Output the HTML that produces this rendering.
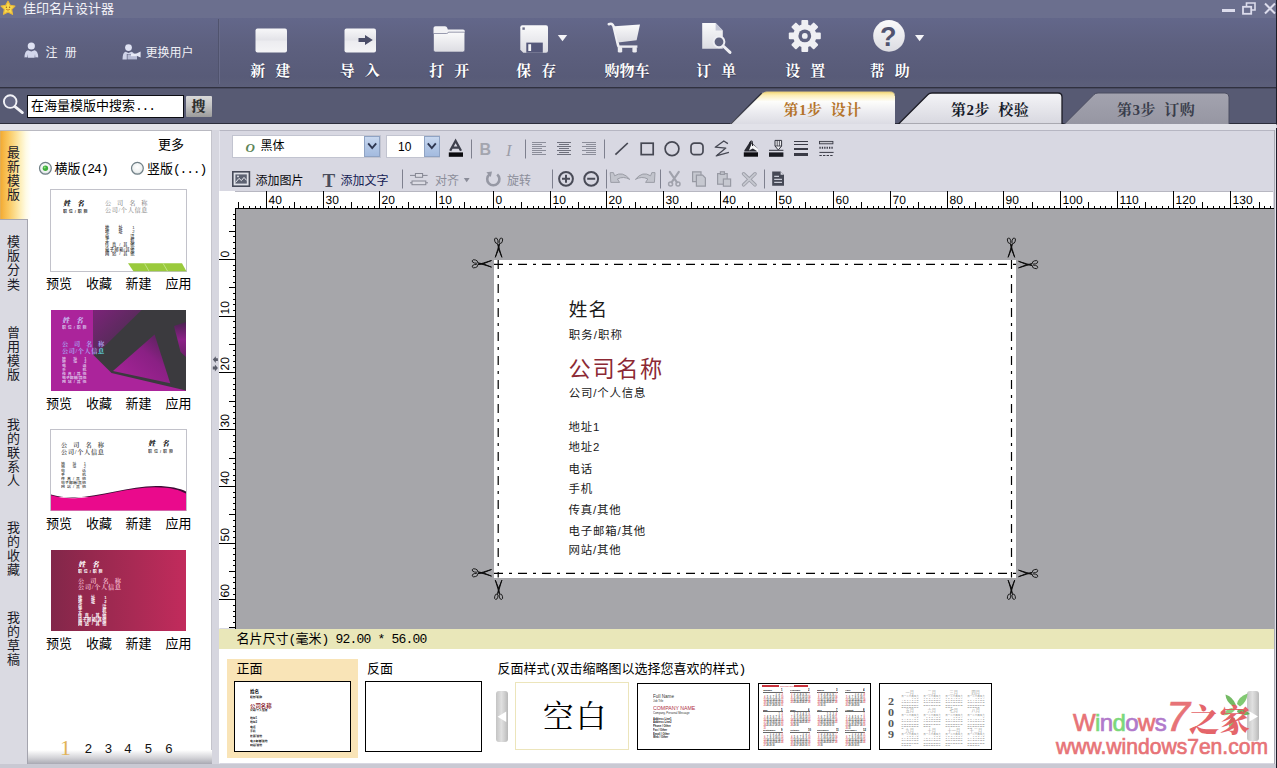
<!DOCTYPE html>
<html lang="zh-CN">
<head>
<meta charset="utf-8">
<title>佳印名片设计器</title>
<style>
*{box-sizing:border-box;margin:0;padding:0}
html,body{width:1277px;height:768px;overflow:hidden}
body{position:relative;background:#d9d9e1;font-family:"Liberation Sans","Noto Sans CJK SC",sans-serif;font-size:13px;color:#000;line-height:1}
.a{position:absolute}
.t{position:absolute;white-space:nowrap;line-height:1}
.ui{font-family:"Liberation Mono","Noto Sans CJK SC",monospace}
.song{font-family:"Liberation Serif","Noto Serif CJK SC",serif}
.hei{font-family:"Liberation Sans","Noto Sans CJK SC",sans-serif}
svg{position:absolute;overflow:visible}
/* title + toolbar */
#title{left:0;top:0;width:1277px;height:18px;background:#6b6f8e}
#tbar{left:0;top:18px;width:1277px;height:69px;background:linear-gradient(#63678a 0%,#5d607f 40%,#585b78 85%,#5c5f7a 100%)}
#tline{left:0;top:87px;width:1277px;height:2px;background:linear-gradient(#30313f 50%,#484a60 50%)}
#sbar{left:0;top:89px;width:1277px;height:35px;background:#575a73}
.tl{color:#fff;font-weight:700;font-size:15px;font-family:"Liberation Serif","Noto Serif CJK SC",serif;text-shadow:0 1px 1px rgba(30,30,50,.6)}
</style>
</head>
<body>
<div class="a" id="title"></div>
<div class="a" id="tbar"></div>
<div class="a" id="tline"></div>
<div class="a" id="sbar"></div>
<div class="a" style="left:1276px;top:0;width:1px;height:768px;background:#1c1c28"></div>
<!-- app icon -->
<svg style="left:0;top:0" width="17" height="17" viewBox="0 0 17 17"><path d="M8 1.2 L10.2 5.4 L14.9 6 L11.6 9.4 L12.5 14.3 L8 12 L3.5 14.3 L4.4 9.4 L1.1 6 L5.8 5.4 Z" fill="#f7d94c" stroke="#e9b93a" stroke-width="1.2" stroke-linejoin="round"/><circle cx="6.4" cy="7.3" r=".7" fill="#a0601c"/><circle cx="9.6" cy="7.3" r=".7" fill="#a0601c"/><path d="M6.2 9.3 Q8 11 9.8 9.3" stroke="#c0651c" stroke-width=".8" fill="none"/></svg>
<div class="t ui" style="left:23px;top:2.5px;font-size:13px;color:#f3f3f8">佳印名片设计器</div>
<!-- window buttons -->
<div class="a" style="left:1222px;top:9px;width:13px;height:3px;background:#dcdcec"></div>
<svg style="left:1242px;top:2px" width="14" height="13" viewBox="0 0 14 13"><path d="M4.5 4.5V1h8.5v7H9.5" fill="none" stroke="#dcdcec" stroke-width="1.6"/><rect x="1" y="4.8" width="8.2" height="7" fill="none" stroke="#dcdcec" stroke-width="1.8"/></svg>
<svg style="left:1264px;top:3px" width="12" height="11" viewBox="0 0 12 11"><path d="M1 .5L11 10.5M11 .5L1 10.5" stroke="#dcdcec" stroke-width="2"/></svg>
<!-- left toolbar -->
<svg style="left:24px;top:42px" width="15" height="16" viewBox="0 0 15 16"><circle cx="7.3" cy="4" r="3.6" fill="#dfe2f3"/><path d="M.5 15.5Q.5 9 4 8.2L7.3 9.5L10.6 8.2Q14.2 9 14.2 15.5Q12.5 15 11.3 15.5L11 12L10.6 15.7H4L3.6 12L3.3 15.5Q2 15 .5 15.5Z" fill="#d3d7ec"/></svg>
<div class="t ui" style="left:45.5px;top:47.5px;font-size:12px;color:#f0f0f6;word-spacing:0">注 册</div>
<svg style="left:122px;top:43.6px" width="20" height="16" viewBox="0 0 20 16"><circle cx="6.5" cy="3.6" r="3.4" fill="#dfe2f3"/><path d="M.5 15.5Q.5 8.6 3.6 7.8L6.5 9L9.4 7.8Q11.5 8.4 12 10H4.8V15.6Z" fill="#cfd3e8"/><rect x="5.5" y="10.4" width="9.5" height="5" fill="#b9bdd6"/><path d="M14 9.8L18.6 7.6V13.4L14 11.6Z" fill="#e4e6f4"/><rect x="9" y="9.6" width="5.5" height="2.6" fill="#e9ebf7"/></svg>
<div class="t ui" style="left:145.5px;top:47.5px;font-size:12px;color:#f0f0f6">更换用户</div>
<div class="a" style="left:218px;top:19px;width:1px;height:65px;background:#50536d"></div>
<div class="a" style="left:219px;top:19px;width:1px;height:65px;background:#676a88"></div>
<!-- main toolbar icons -->
<svg style="left:0;top:0" width="1277" height="88" viewBox="0 0 1277 88">
<defs>
<linearGradient id="gw" x1="0" y1="0" x2="0" y2="1"><stop offset="0" stop-color="#f7f7f9"/><stop offset=".48" stop-color="#e3e3e8"/><stop offset=".52" stop-color="#ececf0"/><stop offset="1" stop-color="#f4f4f6"/></linearGradient>
<linearGradient id="gw2" x1="0" y1="0" x2="0" y2="1"><stop offset="0" stop-color="#fafafb"/><stop offset="1" stop-color="#dcdce2"/></linearGradient>
</defs>
<!-- new -->
<rect x="255.5" y="28.5" width="31.5" height="24" rx="2" fill="url(#gw)"/>
<!-- import -->
<rect x="344.5" y="28.5" width="31.5" height="24" rx="2" fill="url(#gw)"/>
<path d="M358.5 38H365V35L372.8 40L365 45V42H358.5Z" fill="#4a4d68"/>
<!-- open -->
<path d="M433.5 28Q433.5 26.2 435.5 26.2H445Q446.8 26.2 447.3 28L447.8 29.4H463Q464.8 29.4 464.8 31V34H433.5Z" fill="#f2f2f5"/>
<path d="M433.5 33.5H446.5Q448 33.5 448.4 32.2H464.8V50Q464.8 52 462.8 52H435.5Q433.5 52 433.5 50Z" fill="url(#gw2)" stroke="#5b5e7e" stroke-width=".6"/>
<!-- save -->
<path d="M522.3 25.3H546Q548 25.3 548 27.3V50.7Q548 52.7 546 52.7H523.3L520.3 49.7V27.3Q520.3 25.3 522.3 25.3Z" fill="url(#gw2)"/>
<rect x="526.3" y="42.6" width="16.5" height="10.1" fill="#55587a"/>
<rect x="528.3" y="44.2" width="2.8" height="6.8" fill="#f4f4f6"/>
<rect x="522.4" y="27.4" width="2.4" height="2.4" fill="#6a6d88"/>
<path d="M557.8 35H567.2L562.5 41.2Z" fill="#f4f4f8"/>
<!-- cart -->
<path d="M608.8 24.2Q612.2 22.6 613.6 26.4L618.2 45.6" fill="none" stroke="#f0f0f4" stroke-width="2.6" stroke-linecap="round"/>
<path d="M614.3 26.2L640 24.6L636.6 40.2L618 42.6Z" fill="url(#gw2)"/>
<path d="M617.6 46.6H637.4" stroke="#ececf1" stroke-width="2.4"/>
<rect x="617.8" y="47" width="4.4" height="5.6" rx="1.4" fill="#ececf1"/><rect x="632.4" y="47" width="4.4" height="5.6" rx="1.4" fill="#ececf1"/>
<!-- order -->
<path d="M702.2 23H715.6L722.8 30.6V48.7H702.2Z" fill="url(#gw2)"/>
<path d="M715.6 23V30.6H722.8Z" fill="#c4c6d6"/>
<circle cx="719" cy="41.8" r="5.4" fill="#60637f" stroke="#eeeef3" stroke-width="2"/>
<path d="M723.2 46L730 52.4" stroke="#eeeef3" stroke-width="3" stroke-linecap="round"/>
<!-- gear -->
<g transform="translate(804.8 35.9)" fill="#efeff3">
<circle r="11.6"/>
<g id="tooth"><rect x="-3.4" y="-16" width="6.8" height="7" rx="1"/></g>
<use href="#tooth" transform="rotate(45)"/><use href="#tooth" transform="rotate(90)"/><use href="#tooth" transform="rotate(135)"/><use href="#tooth" transform="rotate(180)"/><use href="#tooth" transform="rotate(225)"/><use href="#tooth" transform="rotate(270)"/><use href="#tooth" transform="rotate(315)"/>
<circle r="6.4" fill="#5f6280"/><circle r="2.9"/>
</g>
<!-- help -->
<circle cx="889" cy="35.9" r="15.8" fill="url(#gw2)"/>
<path d="M915 35H924.2L919.6 41.2Z" fill="#f4f4f8"/>
</svg>
<div class="t" style="left:880px;top:22px;font:700 27px 'Liberation Sans',sans-serif;color:#50536f">?</div>
<div class="t tl" style="left:250.3px;top:63.7px;word-spacing:6.3px">新 建</div>
<div class="t tl" style="left:339.8px;top:63.7px;word-spacing:6.3px">导 入</div>
<div class="t tl" style="left:429.3px;top:63.7px;word-spacing:6.3px">打 开</div>
<div class="t tl" style="left:516.3px;top:63.7px;word-spacing:6.3px">保 存</div>
<div class="t tl" style="left:604.5px;top:63.7px">购物车</div>
<div class="t tl" style="left:696.3px;top:63.7px;word-spacing:6.3px">订 单</div>
<div class="t tl" style="left:785.3px;top:63.7px;word-spacing:6.3px">设 置</div>
<div class="t tl" style="left:869.8px;top:63.7px;word-spacing:6.3px">帮 助</div>
<!-- search -->
<svg style="left:0;top:90px" width="28" height="30" viewBox="0 90 28 30"><circle cx="10.2" cy="101.6" r="6.3" fill="#676a86" stroke="#f2f2f7" stroke-width="1.9"/><path d="M15 106.6L22.4 112.6" stroke="#f2f2f7" stroke-width="2.8" stroke-linecap="round"/></svg>
<div class="a" style="left:27px;top:95px;width:157px;height:23px;background:#fff;border:1.5px solid #0c0c12"></div>
<div class="t ui" style="left:31px;top:100px;font-size:13px;letter-spacing:0">在海量模版中搜索<span style="letter-spacing:-1.2px">...</span></div>
<div class="a" style="left:186px;top:96px;width:26px;height:21px;background:linear-gradient(#d9d9d9,#c4c4c4 45%,#9c9c9c);border-radius:1px"></div>
<div class="t song" style="left:191.5px;top:99.5px;font-size:14px;font-weight:900;color:#303030">搜</div>
<div class="a" style="left:0;top:123.4px;width:732px;height:1.1px;background:#2c2d3b"></div><div class="a" style="left:895px;top:123.4px;width:381px;height:1.1px;background:#2c2d3b"></div>
<!-- step tabs -->
<svg style="left:700px;top:88px" width="577" height="40" viewBox="700 88 577 40">
<defs>
<linearGradient id="t1" x1="0" y1="0" x2="0" y2="1"><stop offset="0" stop-color="#f3d571"/><stop offset=".12" stop-color="#fbeeb8"/><stop offset=".3" stop-color="#fdfdfb"/><stop offset=".6" stop-color="#ededf1"/><stop offset="1" stop-color="#dadae2"/></linearGradient>
<linearGradient id="t2" x1="0" y1="0" x2="0" y2="1"><stop offset="0" stop-color="#f4f4f7"/><stop offset="1" stop-color="#d7d7df"/></linearGradient>
<linearGradient id="t3" x1="0" y1="0" x2="0" y2="1"><stop offset="0" stop-color="#a3a3af"/><stop offset="1" stop-color="#9696a2"/></linearGradient>
</defs>
<path d="M1064 124.5L1094 94.5Q1095.5 93 1098 93H1225Q1229 93 1229 97V124.5Z" fill="url(#t3)" stroke="#4a4c60" stroke-width="1"/>
<path d="M898 124.5L928 94.5Q929.5 93 932 93H1058Q1062 93 1062 97V124.5Z" fill="url(#t2)" stroke="#1c1c26" stroke-width="1.3"/>
<path d="M700 124.4H731L762 93.4Q764 91.4 767 91.4H890Q895 91.4 895 96V124.4H1277V128H700Z" fill="#d9d9e1"/>
<path d="M729 125L762 93.4Q764 91.4 767 91.4H890Q895 91.4 895 96V125Z" fill="url(#t1)"/>
<path d="M730.4 124.4L761.6 93.2" fill="none" stroke="#1e1f2a" stroke-width="1.3" opacity=".8"/><path d="M762 93.4Q764 91.6 767 91.6H890Q894.8 91.6 894.8 96" fill="none" stroke="#3d3f52" stroke-width=".7" opacity=".5"/>
</svg>
<div class="t song" style="left:783.5px;top:103px;font-size:15px;font-weight:700;color:#b4742a;word-spacing:4px;letter-spacing:.5px">第1步 设计</div>
<div class="t song" style="left:951px;top:103.2px;font-size:15px;font-weight:700;color:#161b2a;word-spacing:4px;letter-spacing:.5px">第2步 校验</div>
<div class="t song" style="left:1117px;top:103.2px;font-size:15px;font-weight:700;color:#3a3e4c;word-spacing:4px;letter-spacing:.5px">第3步 订购</div>
<!-- left panel -->
<style>
.vt{position:absolute;left:7px;width:13px;font-size:13px;line-height:14.05px;color:#1b1b28;text-align:center;word-break:break-all;white-space:normal}
.lb{position:absolute;font-size:13px;white-space:nowrap;line-height:1;color:#000}
.pg{position:absolute;top:743px;font-size:13px;line-height:1;color:#111}
</style>
<div class="a" style="left:0;top:124px;width:1276px;height:6px;background:#e2e2e9"></div>
<div class="a" style="left:0;top:130px;width:28px;height:638px;background:#dadae2;border-right:1px solid #a4a4ae"></div>
<div class="a" style="left:28px;top:130px;width:184px;height:634px;background:#fff;border-right:1px solid #c4c4cc"></div>
<div class="a" style="left:28px;top:750px;width:183.5px;height:14px;background:linear-gradient(#fff,#d4d4d8 55%,#a9a9b3)"></div>
<div class="a" style="left:212px;top:130px;width:7px;height:638px;background:#d6d6df"></div>
<div class="a" style="left:0;top:219px;width:28px;height:1px;background:#a6a6b0"></div><div class="a" style="left:0;top:130px;width:60px;height:89px;background:linear-gradient(90deg,#d8b06a 0,#f3ac36 1.2px,#f6b847 4px,#fac962 9px,#fcdd8e 15px,#fef0be 21px,#fffbe6 26px,#fff 31px,#fff 100%)"></div>
<div class="a" style="left:0;top:129.5px;width:212px;height:1px;background:#b9b9c1"></div>
<div class="vt ui" style="top:146.5px">最新模版</div>
<div class="vt ui" style="top:236.4px">模版分类</div>
<div class="vt ui" style="top:327px">曾用模版</div>
<div class="vt ui" style="top:419px">我的联系人</div>
<div class="vt ui" style="top:521.5px">我的收藏</div>
<div class="vt ui" style="top:611.5px">我的草稿</div>
<div class="lb ui" style="left:158px;top:138.5px">更多</div>
<!-- radios -->
<svg style="left:38px;top:161px" width="110" height="15" viewBox="38 161 110 15">
<defs><radialGradient id="rg" cx=".5" cy=".4" r=".6"><stop offset="0" stop-color="#fff"/><stop offset=".7" stop-color="#eef1f1"/><stop offset="1" stop-color="#cfd6d8"/></radialGradient></defs>
<circle cx="45.4" cy="168.3" r="5.9" fill="url(#rg)" stroke="#6f7f86" stroke-width="1.2"/><circle cx="45.4" cy="168.3" r="2.7" fill="#3fae3b"/><circle cx="44.7" cy="167.6" r="1" fill="#8fe085"/>
<circle cx="137.4" cy="168.3" r="5.9" fill="url(#rg)" stroke="#6f7f86" stroke-width="1.2"/>
</svg>
<div class="lb ui" style="left:54.5px;top:163px">横版<span style="letter-spacing:-1px">(24)</span></div>
<div class="lb ui" style="left:147px;top:163px">竖版<span style="letter-spacing:-1.2px">(...)</span></div>
<svg style="left:211px;top:354px" width="9" height="20" viewBox="211 354 9 20"><path d="M212.8 359.6L215.8 356.2V358.2H217.9V361H215.8V363Z" fill="#5a5d6a"/><path d="M217.9 368L214.9 364.6V366.6H212.8V369.4H214.9V371.4Z" fill="#5a5d6a"/></svg>
<div class="lb ui" style="left:46px;top:277.5px">预览</div>
<div class="lb ui" style="left:86px;top:277.5px">收藏</div>
<div class="lb ui" style="left:125.5px;top:277.5px">新建</div>
<div class="lb ui" style="left:165.5px;top:277.5px">应用</div>
<div class="lb ui" style="left:46px;top:397.5px">预览</div>
<div class="lb ui" style="left:86px;top:397.5px">收藏</div>
<div class="lb ui" style="left:125.5px;top:397.5px">新建</div>
<div class="lb ui" style="left:165.5px;top:397.5px">应用</div>
<div class="lb ui" style="left:46px;top:517.5px">预览</div>
<div class="lb ui" style="left:86px;top:517.5px">收藏</div>
<div class="lb ui" style="left:125.5px;top:517.5px">新建</div>
<div class="lb ui" style="left:165.5px;top:517.5px">应用</div>
<div class="lb ui" style="left:46px;top:637.5px">预览</div>
<div class="lb ui" style="left:86px;top:637.5px">收藏</div>
<div class="lb ui" style="left:125.5px;top:637.5px">新建</div>
<div class="lb ui" style="left:165.5px;top:637.5px">应用</div>
<div class="t song" style="left:60px;top:737px;font-size:22px;color:#e2b455">1</div>
<div class="pg ui" style="left:84.5px">2</div>
<div class="pg ui" style="left:104.5px">3</div>
<div class="pg ui" style="left:124px">4</div>
<div class="pg ui" style="left:144.5px">5</div>
<div class="pg ui" style="left:165px">6</div>
<!-- template thumbnails -->
<div class="a" style="left:50px;top:189px;width:137px;height:83px;background:#fff;border:1px solid #c2c2ca"></div>
<svg style="left:50px;top:189px" width="137" height="83" viewBox="50 189 137 83"><path d="M128 263.3H182L186.4 271.2H133.4Z" fill="#9aca3c"/><path d="M144.5 263.3L149 271.2M163 263.3L167.6 271.2" stroke="#c4e48a" stroke-width=".9"/></svg>
<div class="t song" style="left:63.4px;top:199.6px;font-size:12px;line-height:12px;color:#151515;transform:scale(0.6000);transform-origin:0 0;font-weight:900;width:35.0px;text-align:justify;text-align-last:justify;white-space:normal;font-style:italic;">姓名</div>
<div class="t hei" style="left:63.4px;top:209.6px;font-size:12px;line-height:12px;color:#444;transform:scale(0.3333);transform-origin:0 0;font-weight:700;width:73.5px;text-align:justify;text-align-last:justify;white-space:normal;">职位/职称</div>
<div class="t song" style="left:105px;top:200.2px;font-size:12px;line-height:12px;color:#8a8a8a;transform:scale(0.5167);transform-origin:0 0;font-weight:500;width:82.1px;text-align:justify;text-align-last:justify;white-space:normal;">公司名称</div>
<div class="t song" style="left:105px;top:206.6px;font-size:12px;line-height:12px;color:#8a8a8a;transform:scale(0.5167);transform-origin:0 0;font-weight:500;width:82.1px;text-align:justify;text-align-last:justify;white-space:normal;">公司/个人信息</div>
<div class="t hei" style="left:105px;top:225.0px;font-size:12px;line-height:12px;color:#333;transform:scale(0.3500);transform-origin:0 0;font-weight:500;width:84.3px;text-align:justify;text-align-last:justify;white-space:normal;">地址1</div>
<div class="t hei" style="left:105px;top:229.35px;font-size:12px;line-height:12px;color:#333;transform:scale(0.3500);transform-origin:0 0;font-weight:500;width:84.3px;text-align:justify;text-align-last:justify;white-space:normal;">地址2</div>
<div class="t hei" style="left:105px;top:233.7px;font-size:12px;line-height:12px;color:#333;transform:scale(0.3500);transform-origin:0 0;font-weight:500;width:84.3px;text-align:justify;text-align-last:justify;white-space:normal;">电话</div>
<div class="t hei" style="left:105px;top:238.05px;font-size:12px;line-height:12px;color:#333;transform:scale(0.3500);transform-origin:0 0;font-weight:500;width:84.3px;text-align:justify;text-align-last:justify;white-space:normal;">手机</div>
<div class="t hei" style="left:105px;top:242.4px;font-size:12px;line-height:12px;color:#333;transform:scale(0.3500);transform-origin:0 0;font-weight:500;width:84.3px;text-align:justify;text-align-last:justify;white-space:normal;">传真/其他</div>
<div class="t hei" style="left:105px;top:246.75px;font-size:12px;line-height:12px;color:#333;transform:scale(0.3500);transform-origin:0 0;font-weight:500;width:84.3px;text-align:justify;text-align-last:justify;white-space:normal;">电子邮箱/其他</div>
<div class="t hei" style="left:105px;top:251.1px;font-size:12px;line-height:12px;color:#333;transform:scale(0.3500);transform-origin:0 0;font-weight:500;width:84.3px;text-align:justify;text-align-last:justify;white-space:normal;">网站/其他</div>
<svg style="left:51px;top:310px" width="135" height="81" viewBox="51 310 135 81">
<defs>
<linearGradient id="p1" x1="0" y1="0" x2="1" y2="1"><stop offset="0" stop-color="#7c2379"/><stop offset=".5" stop-color="#5c2a5e"/><stop offset="1" stop-color="#403644"/></linearGradient>
<linearGradient id="p2" x1="0" y1="1" x2="1" y2="0"><stop offset="0" stop-color="#ab249b"/><stop offset=".6" stop-color="#8a2084"/><stop offset="1" stop-color="#4a2450"/></linearGradient>
<linearGradient id="p3" x1="0" y1="0" x2="0" y2="1"><stop offset="0" stop-color="#4a2250"/><stop offset=".5" stop-color="#8c2188"/><stop offset="1" stop-color="#6a2068"/></linearGradient>
<linearGradient id="p4" x1="0" y1="0" x2="1" y2="1"><stop offset="0" stop-color="#3b3a3e"/><stop offset="1" stop-color="#7a2078"/></linearGradient>
</defs>
<rect x="51" y="310" width="135" height="81" fill="#ab249b"/>
<path d="M93.4 310H186V390.5L111.5 373L93.4 355Z" fill="#3b3a3e"/>
<path d="M93.4 310H141.6L98.6 352L93.4 354.7Z" fill="url(#p1)"/>
<path d="M154.6 334.5L170.2 383.3L113 371Z" fill="url(#p2)"/>
<path d="M174 326L186 322V357L180.6 352Z" fill="url(#p3)"/>
</svg>
<div class="t song" style="left:61.5px;top:316.8px;font-size:12px;line-height:12px;color:#c8b4ee;transform:scale(0.6000);transform-origin:0 0;font-weight:900;width:35.0px;text-align:justify;text-align-last:justify;white-space:normal;font-style:italic;">姓名</div>
<div class="t hei" style="left:61.5px;top:326px;font-size:12px;line-height:12px;color:#d4bce8;transform:scale(0.3333);transform-origin:0 0;font-weight:700;width:73.5px;text-align:justify;text-align-last:justify;white-space:normal;">职位/职称</div>
<div class="t song" style="left:61.5px;top:341.4px;font-size:12px;line-height:12px;color:#a9a4f0;transform:scale(0.5167);transform-origin:0 0;font-weight:700;width:81.9px;text-align:justify;text-align-last:justify;white-space:normal;">公司名称</div>
<div class="t song" style="left:61.5px;top:348.2px;font-size:12px;line-height:12px;color:#a9a4f0;transform:scale(0.5167);transform-origin:0 0;font-weight:700;width:81.9px;text-align:justify;text-align-last:justify;white-space:normal;">公司/个人信<span style="color:#5fd6e0">息</span></div>
<div class="t hei" style="left:61.5px;top:356.5px;font-size:12px;line-height:12px;color:#dcbfe6;transform:scale(0.3250);transform-origin:0 0;font-weight:700;width:75.4px;text-align:justify;text-align-last:justify;white-space:normal;">地址1</div>
<div class="t hei" style="left:61.5px;top:360.45px;font-size:12px;line-height:12px;color:#dcbfe6;transform:scale(0.3250);transform-origin:0 0;font-weight:700;width:75.4px;text-align:justify;text-align-last:justify;white-space:normal;">地址2</div>
<div class="t hei" style="left:61.5px;top:364.4px;font-size:12px;line-height:12px;color:#dcbfe6;transform:scale(0.3250);transform-origin:0 0;font-weight:700;width:75.4px;text-align:justify;text-align-last:justify;white-space:normal;">电话</div>
<div class="t hei" style="left:61.5px;top:368.35px;font-size:12px;line-height:12px;color:#dcbfe6;transform:scale(0.3250);transform-origin:0 0;font-weight:700;width:75.4px;text-align:justify;text-align-last:justify;white-space:normal;">手机</div>
<div class="t hei" style="left:61.5px;top:372.3px;font-size:12px;line-height:12px;color:#dcbfe6;transform:scale(0.3250);transform-origin:0 0;font-weight:700;width:75.4px;text-align:justify;text-align-last:justify;white-space:normal;">传真/其他</div>
<div class="t hei" style="left:61.5px;top:376.25px;font-size:12px;line-height:12px;color:#dcbfe6;transform:scale(0.3250);transform-origin:0 0;font-weight:700;width:75.4px;text-align:justify;text-align-last:justify;white-space:normal;">电子邮箱/其他</div>
<div class="t hei" style="left:61.5px;top:380.2px;font-size:12px;line-height:12px;color:#dcbfe6;transform:scale(0.3250);transform-origin:0 0;font-weight:700;width:75.4px;text-align:justify;text-align-last:justify;white-space:normal;">网站/其他</div>
<div class="a" style="left:50px;top:429px;width:137px;height:82px;background:#fff;border:1px solid #c2c2ca"></div>
<svg style="left:51px;top:430px" width="135" height="81" viewBox="51 430 135 81"><path d="M51 494.4Q62 497.8 75 497.4C100 496.6 130 486 156 486C170 486 180 488.5 186 491.4V497H51Z" fill="#3c0c34"/><path d="M51 495.2Q62 498.6 75 498.2C100 497.4 128 487.4 154 487.2C170 487 180 490 186 493.6V510.5H51Z" fill="#ea0a8c"/></svg>
<div class="t song" style="left:60.8px;top:442.4px;font-size:12px;line-height:12px;color:#555;transform:scale(0.5167);transform-origin:0 0;font-weight:700;width:83.2px;text-align:justify;text-align-last:justify;white-space:normal;">公司名称</div>
<div class="t song" style="left:60.8px;top:448.8px;font-size:12px;line-height:12px;color:#555;transform:scale(0.5167);transform-origin:0 0;font-weight:700;width:83.2px;text-align:justify;text-align-last:justify;white-space:normal;">公司/个人信息</div>
<div class="t hei" style="left:60.8px;top:461.5px;font-size:12px;line-height:12px;color:#333;transform:scale(0.3250);transform-origin:0 0;font-weight:500;width:76.9px;text-align:justify;text-align-last:justify;white-space:normal;">地址1</div>
<div class="t hei" style="left:60.8px;top:465.45px;font-size:12px;line-height:12px;color:#333;transform:scale(0.3250);transform-origin:0 0;font-weight:500;width:76.9px;text-align:justify;text-align-last:justify;white-space:normal;">地址2</div>
<div class="t hei" style="left:60.8px;top:469.4px;font-size:12px;line-height:12px;color:#333;transform:scale(0.3250);transform-origin:0 0;font-weight:500;width:76.9px;text-align:justify;text-align-last:justify;white-space:normal;">电话</div>
<div class="t hei" style="left:60.8px;top:473.35px;font-size:12px;line-height:12px;color:#333;transform:scale(0.3250);transform-origin:0 0;font-weight:500;width:76.9px;text-align:justify;text-align-last:justify;white-space:normal;">手机</div>
<div class="t hei" style="left:60.8px;top:477.3px;font-size:12px;line-height:12px;color:#333;transform:scale(0.3250);transform-origin:0 0;font-weight:500;width:76.9px;text-align:justify;text-align-last:justify;white-space:normal;">传真/其他</div>
<div class="t hei" style="left:60.8px;top:481.25px;font-size:12px;line-height:12px;color:#333;transform:scale(0.3250);transform-origin:0 0;font-weight:500;width:76.9px;text-align:justify;text-align-last:justify;white-space:normal;">电子邮箱/其他</div>
<div class="t hei" style="left:60.8px;top:485.2px;font-size:12px;line-height:12px;color:#333;transform:scale(0.3250);transform-origin:0 0;font-weight:500;width:76.9px;text-align:justify;text-align-last:justify;white-space:normal;">网站/其他</div>
<div class="t song" style="left:148px;top:440.4px;font-size:12px;line-height:12px;color:#151515;transform:scale(0.6000);transform-origin:0 0;font-weight:900;width:35.0px;text-align:justify;text-align-last:justify;white-space:normal;font-style:italic;">姓名</div>
<div class="t hei" style="left:148px;top:449.6px;font-size:12px;line-height:12px;color:#555;transform:scale(0.3333);transform-origin:0 0;font-weight:700;width:75.0px;text-align:justify;text-align-last:justify;white-space:normal;">职位/职称</div>
<div class="a" style="left:51px;top:550px;width:135px;height:80.5px;background:linear-gradient(90deg,#82274a,#96284e 30%,#a82a54 60%,#c22b5c)"></div>
<div class="t song" style="left:78.4px;top:561px;font-size:12px;line-height:12px;color:#fff;transform:scale(0.6000);transform-origin:0 0;font-weight:900;width:35.0px;text-align:justify;text-align-last:justify;white-space:normal;font-style:italic;">姓名</div>
<div class="t hei" style="left:78.4px;top:569.6px;font-size:12px;line-height:12px;color:#fff;transform:scale(0.3333);transform-origin:0 0;font-weight:700;width:73.5px;text-align:justify;text-align-last:justify;white-space:normal;">职位/职称</div>
<div class="t song" style="left:78.4px;top:578px;font-size:12px;line-height:12px;color:#f0b4c8;transform:scale(0.5167);transform-origin:0 0;font-weight:700;width:83.2px;text-align:justify;text-align-last:justify;white-space:normal;">公司名称</div>
<div class="t song" style="left:78.4px;top:584.4px;font-size:12px;line-height:12px;color:#f0b4c8;transform:scale(0.5167);transform-origin:0 0;font-weight:700;width:83.2px;text-align:justify;text-align-last:justify;white-space:normal;">公司/个人信息</div>
<div class="t hei" style="left:78.4px;top:595.0px;font-size:12px;line-height:12px;color:#fff;transform:scale(0.3500);transform-origin:0 0;font-weight:700;width:81.4px;text-align:justify;text-align-last:justify;white-space:normal;">地址1</div>
<div class="t hei" style="left:78.4px;top:599.4px;font-size:12px;line-height:12px;color:#fff;transform:scale(0.3500);transform-origin:0 0;font-weight:700;width:81.4px;text-align:justify;text-align-last:justify;white-space:normal;">地址2</div>
<div class="t hei" style="left:78.4px;top:603.8px;font-size:12px;line-height:12px;color:#fff;transform:scale(0.3500);transform-origin:0 0;font-weight:700;width:81.4px;text-align:justify;text-align-last:justify;white-space:normal;">电话</div>
<div class="t hei" style="left:78.4px;top:608.2px;font-size:12px;line-height:12px;color:#fff;transform:scale(0.3500);transform-origin:0 0;font-weight:700;width:81.4px;text-align:justify;text-align-last:justify;white-space:normal;">手机</div>
<div class="t hei" style="left:78.4px;top:612.6px;font-size:12px;line-height:12px;color:#fff;transform:scale(0.3500);transform-origin:0 0;font-weight:700;width:81.4px;text-align:justify;text-align-last:justify;white-space:normal;">传真/其他</div>
<div class="t hei" style="left:78.4px;top:617.0px;font-size:12px;line-height:12px;color:#fff;transform:scale(0.3500);transform-origin:0 0;font-weight:700;width:81.4px;text-align:justify;text-align-last:justify;white-space:normal;">电子邮箱/其他</div>
<div class="t hei" style="left:78.4px;top:621.4px;font-size:12px;line-height:12px;color:#fff;transform:scale(0.3500);transform-origin:0 0;font-weight:700;width:81.4px;text-align:justify;text-align-last:justify;white-space:normal;">网站/其他</div>
<!-- right panel frame -->
<div class="a" style="left:219px;top:130px;width:1055px;height:634px;background:#d8d8e2;border-top:1px solid #b6b6c2;border-left:1px solid #e6e6ee"></div>
<div class="a" style="left:1273.5px;top:130px;width:2.5px;height:634px;background:#e0e0e8;border-left:1px solid #a9a9b3"></div>
<div class="a" style="left:0;top:764px;width:1276px;height:4px;background:#c9c9d3"></div>
<!-- font combos -->
<div class="a" style="left:232px;top:135px;width:148.5px;height:22.5px;background:#fff;border:1px solid #c2c4d0"></div>
<div class="a" style="left:364px;top:136px;width:16px;height:20.5px;background:linear-gradient(#c9d8ef,#b3c7e6 50%,#a4bbdf);border:1px solid #8fa3c4"></div>
<div class="a" style="left:385.5px;top:135px;width:54.5px;height:22.5px;background:#fff;border:1px solid #c2c4d0"></div>
<div class="a" style="left:424px;top:136px;width:15.5px;height:20.5px;background:linear-gradient(#c9d8ef,#b3c7e6 50%,#a4bbdf);border:1px solid #8fa3c4"></div>
<div class="t" style="left:245.5px;top:139.5px;font:italic 700 13px 'Liberation Serif',serif;color:#5d8558">O</div>
<div class="t ui" style="left:260.5px;top:141px;font-size:12px">黑体</div>
<div class="t" style="left:398px;top:140.3px;font:12px 'Liberation Sans',sans-serif">10</div>
<svg style="left:219px;top:131px" width="660" height="60" viewBox="219 131 660 60">
<g fill="none" stroke="#2e3650" stroke-width="1.9"><path d="M368.2 143.4L372.2 148L376.2 143.4"/><path d="M427.8 143.4L431.8 148L435.8 143.4"/></g>
<!-- A colour -->
<path d="M450.2 150.8L455.6 140.8L461 150.8M452.4 147.6H458.8" fill="none" stroke="#3f414d" stroke-width="2.3"/>
<rect x="448.8" y="152.4" width="14.2" height="4.4" fill="#0a0a0e"/>
<g stroke="#7e808e" stroke-width="1"><path d="M471.5 139.5V158.5M525.5 139.5V158.5M604.5 139.5V158.5M402.5 169.5V188.5M552.5 169.5V188.5M606.5 169.5V188.5M660.5 169.5V188.5M764.5 169.5V188.5"/></g>
<!-- align icons -->
<g stroke-width="1" shape-rendering="crispEdges"><path stroke="#8b8d99" d="M532 142.5H546M532 144.5H542M532 146.5H546M532 148.5H542M532 150.5H546M532 152.5H542M532 154.5H546"/><path stroke="#6e707c" d="M557 142.5H571M559 144.5H569M557 146.5H571M559 148.5H569M557 150.5H571M559 152.5H569M557 154.5H571"/><path stroke="#8b8d99" d="M582 142.5H596M586 144.5H596M582 146.5H596M586 148.5H596M582 150.5H596M586 152.5H596M582 154.5H596"/></g>
<!-- shapes -->
<g fill="none" stroke="#464853" stroke-width="1.7"><path d="M615.4 154.6L627.8 143"/><rect x="641.2" y="143.2" width="12" height="11.4"/><circle cx="672" cy="148.8" r="6.9"/><rect x="691" y="143.2" width="12" height="11.4" rx="3.4"/><path d="M727.9 143.6L723.8 141L715.2 147.2L725.8 148.1L716.2 155.9L728.9 152.3" stroke-width="1.3" stroke-linejoin="round"/></g>
<!-- fill bucket -->
<rect x="743.8" y="152.3" width="14.2" height="4.4" fill="#0e0e12"/>
<path d="M744.3 150.6L750.3 141.2L757.9 148.6L756.6 151.6H744.3Z" fill="#2a2b33"/><path d="M751.6 143.4L757.9 148.6L758.2 151.8L752.8 148.4L749 150.4Z" fill="#f6f6f8"/><path d="M749.8 146.4Q749.2 139.8 752.2 141.2L752.6 146" fill="none" stroke="#1c1d24" stroke-width="1"/>
<!-- pen colour -->
<rect x="769" y="152.4" width="14.4" height="4.4" fill="#1a1b22"/><path d="M769 150.3H783.4" stroke="#33343e" stroke-width="1"/>
<path d="M775 140.4H781.6V146L778.3 150L775 146Z" fill="#ececf0" stroke="#33343e" stroke-width="1"/><path d="M777.2 140.4V146M779.4 140.4V146M775 146H781.6" stroke="#33343e" stroke-width=".8"/>
<!-- line weight -->
<g stroke="#3a3b46" shape-rendering="crispEdges"><path d="M794 141.5H808" stroke-width="1"/><path d="M794 144.5H808" stroke-width="1"/><path d="M794 149H808" stroke-width="2"/><path d="M794 154.5H808" stroke-width="3"/></g>
<!-- line style -->
<rect x="819.5" y="141.4" width="13.4" height="2.4" fill="#c8c8d0" stroke="#3a3b46" stroke-width=".9"/><path d="M819.4 147.8H833.6" stroke="#3a3b46" stroke-width="2" stroke-dasharray="1.3 1.1"/><path d="M819.4 152.4H833.6" stroke="#3a3b46" stroke-width="1"/><path d="M819.4 155.5H833.6" stroke="#3a3b46" stroke-width="1" stroke-dasharray="2.4 1.2"/>
<!-- row 2: add image icon -->
<rect x="232.8" y="171.8" width="16.6" height="14.4" fill="#dfe1e8" stroke="#474b5a" stroke-width="1.6"/><rect x="235.4" y="174.4" width="11.4" height="9.2" fill="#5d6272"/><path d="M235.6 182.4L239 178.4L241.4 180.6L244 177.4L246.6 180.4" fill="none" stroke="#e8eaf0" stroke-width="1"/><circle cx="238" cy="176.4" r=".9" fill="#e8eaf0"/>
<!-- align objects icon -->
<path d="M410 175.4H427.6M410 182.8H428" stroke="#858793" stroke-width="1"/>
<g fill="#dcdce4" stroke="#858793" stroke-width="1"><rect x="415.4" y="173.5" width="7.2" height="3.8"/><rect x="412" y="181" width="13.8" height="3.7"/></g>
<path d="M463.8 178H469.6L466.7 182.2Z" fill="#8a8c98"/>
<!-- rotate -->
<path d="M489.4 174.4A6.1 6.1 0 1 0 497.2 174.4" fill="none" stroke="#9698a4" stroke-width="2.6"/><path d="M486.4 172.2L492 171.4L490.8 177Z" fill="#9698a4"/>
<!-- zoom -->
<g fill="none" stroke="#494b57" stroke-width="2"><circle cx="566" cy="178.8" r="6.9"/><circle cx="591.2" cy="178.8" r="6.9"/><path d="M562 178.8H570M566 174.8V182.8M587.2 178.8H595.2"/></g>
<!-- undo/redo -->
<g fill="#c2c4cc" stroke="#9698a2" stroke-width=".9" stroke-linejoin="round"><path d="M610.2 172.6H613.4L614.6 175.8Q622.6 170.6 629.8 179.4Q623.4 175.8 617.4 179L619.6 182.4H610.8Z"/><path d="M655 172.6H651.8L650.6 175.8Q642.6 170.6 635.4 179.4Q641.8 175.8 647.8 179L645.6 182.4H654.4Z"/></g>
<!-- cut -->
<g fill="none" stroke="#a0a2ac" stroke-width="2.1"><path d="M669.8 171.8L677 182.4M678.8 171.8L671.6 182.4" stroke-linecap="round"/><circle cx="670.6" cy="184" r="2" stroke-width="1.5"/><circle cx="678" cy="184" r="2" stroke-width="1.5"/></g>
<!-- copy -->
<g fill="#c6c8d0" stroke="#989aa4" stroke-width="1.2"><path d="M692.6 171.8H701V181.6H692.6Z"/><path d="M696.4 175.2H702.6L705.4 178V186.2H696.4Z"/></g>
<!-- paste -->
<g fill="#c6c8d0" stroke="#989aa4" stroke-width="1.2"><rect x="717.6" y="173.6" width="9.6" height="10.6"/><rect x="720.4" y="171.8" width="4" height="2.6"/><rect x="723.4" y="179" width="7.2" height="7.2"/></g>
<!-- delete -->
<path d="M743.6 173.8L755 184.8M755 173.8L743.6 184.8" stroke="#9c9ea8" stroke-width="3.6" stroke-linecap="round"/><path d="M743.6 173.8L755 184.8M755 173.8L743.6 184.8" stroke="#c6c8d0" stroke-width="1.8" stroke-linecap="round"/>
<!-- doc -->
<path d="M772.2 171.4H780.6L784 174.8V185.8H772.2Z" fill="#464956"/><path d="M780.6 171.4V174.8H784Z" fill="#d8d8e2"/><path d="M774.2 176.4H779M774.2 179.4H782M774.2 182.4H782" stroke="#c9ccd6" stroke-width="1.2"/>
</svg>
<div class="t" style="left:479.5px;top:140.5px;font:700 16px 'Liberation Sans',sans-serif;color:#a3a5af">B</div>
<div class="t" style="left:506px;top:140.5px;font:italic 400 16.5px 'Liberation Serif',serif;color:#9c9ea9">I</div>
<div class="t ui" style="left:255.5px;top:176.3px;font-size:12px;color:#0a0a10">添加图片</div>
<div class="t" style="left:322.5px;top:169.5px;font:700 19px 'Liberation Serif',serif;color:#4a4d5c">T</div>
<div class="t ui" style="left:340.5px;top:176.3px;font-size:12px;color:#142052">添加文字</div>
<div class="t ui" style="left:435px;top:176.3px;font-size:12px;color:#8c8e9a">对齐</div>
<div class="t ui" style="left:507px;top:176.3px;font-size:12px;color:#8c8e9a">旋转</div>
<!-- rulers + canvas -->
<div class="a" style="left:218.7px;top:190.8px;width:1054.8px;height:17.7px;background:#fff;border-top:1px solid #b7b7c1"></div>
<div class="a" style="left:218.7px;top:191.3px;width:16.8px;height:437.2px;background:#fff"></div>
<div class="a" style="left:235.5px;top:208.5px;width:1038px;height:420px;background:#a6a6aa"></div>
<div class="a" style="left:494px;top:260px;width:522px;height:317.6px;background:#fff"></div>
<svg style="left:219px;top:190px" width="1056" height="440" viewBox="219 190 1056 440" shape-rendering="crispEdges">
<g stroke="#000" stroke-width="1">
<path d="M238.5 202V208M243.5 205.5V208M249.5 205.5V208M255.5 205.5V208M260.5 205.5V208M266.5 191V208M272.5 205.5V208M277.5 205.5V208M283.5 205.5V208M289.5 205.5V208M294.5 202V208M300.5 205.5V208M306.5 205.5V208M311.5 205.5V208M317.5 205.5V208M323.5 191V208M328.5 205.5V208M334.5 205.5V208M340.5 205.5V208M345.5 205.5V208M351.5 202V208M357.5 205.5V208M362.5 205.5V208M368.5 205.5V208M374.5 205.5V208M379.5 191V208M385.5 205.5V208M391.5 205.5V208M396.5 205.5V208M402.5 205.5V208M408.5 202V208M413.5 205.5V208M419.5 205.5V208M425.5 205.5V208M430.5 205.5V208M436.5 191V208M442.5 205.5V208M447.5 205.5V208M453.5 205.5V208M459.5 205.5V208M464.5 202V208M470.5 205.5V208M476.5 205.5V208M481.5 205.5V208M487.5 205.5V208M493.5 191V208M498.5 205.5V208M504.5 205.5V208M510.5 205.5V208M515.5 205.5V208M521.5 202V208M527.5 205.5V208M533.5 205.5V208M538.5 205.5V208M544.5 205.5V208M550.5 191V208M555.5 205.5V208M561.5 205.5V208M567.5 205.5V208M572.5 205.5V208M578.5 202V208M584.5 205.5V208M589.5 205.5V208M595.5 205.5V208M601.5 205.5V208M606.5 191V208M612.5 205.5V208M618.5 205.5V208M623.5 205.5V208M629.5 205.5V208M635.5 202V208M640.5 205.5V208M646.5 205.5V208M652.5 205.5V208M657.5 205.5V208M663.5 191V208M669.5 205.5V208M674.5 205.5V208M680.5 205.5V208M686.5 205.5V208M691.5 202V208M697.5 205.5V208M703.5 205.5V208M708.5 205.5V208M714.5 205.5V208M720.5 191V208M725.5 205.5V208M731.5 205.5V208M737.5 205.5V208M742.5 205.5V208M748.5 202V208M754.5 205.5V208M759.5 205.5V208M765.5 205.5V208M771.5 205.5V208M776.5 191V208M782.5 205.5V208M788.5 205.5V208M793.5 205.5V208M799.5 205.5V208M805.5 202V208M810.5 205.5V208M816.5 205.5V208M822.5 205.5V208M827.5 205.5V208M833.5 191V208M839.5 205.5V208M844.5 205.5V208M850.5 205.5V208M856.5 205.5V208M861.5 202V208M867.5 205.5V208M873.5 205.5V208M878.5 205.5V208M884.5 205.5V208M890.5 191V208M896.5 205.5V208M901.5 205.5V208M907.5 205.5V208M913.5 205.5V208M918.5 202V208M924.5 205.5V208M930.5 205.5V208M935.5 205.5V208M941.5 205.5V208M947.5 191V208M952.5 205.5V208M958.5 205.5V208M964.5 205.5V208M969.5 205.5V208M975.5 202V208M981.5 205.5V208M986.5 205.5V208M992.5 205.5V208M998.5 205.5V208M1003.5 191V208M1009.5 205.5V208M1015.5 205.5V208M1020.5 205.5V208M1026.5 205.5V208M1032.5 202V208M1037.5 205.5V208M1043.5 205.5V208M1049.5 205.5V208M1054.5 205.5V208M1060.5 191V208M1066.5 205.5V208M1071.5 205.5V208M1077.5 205.5V208M1083.5 205.5V208M1088.5 202V208M1094.5 205.5V208M1100.5 205.5V208M1105.5 205.5V208M1111.5 205.5V208M1117.5 191V208M1122.5 205.5V208M1128.5 205.5V208M1134.5 205.5V208M1139.5 205.5V208M1145.5 202V208M1151.5 205.5V208M1156.5 205.5V208M1162.5 205.5V208M1168.5 205.5V208M1173.5 191V208M1179.5 205.5V208M1185.5 205.5V208M1190.5 205.5V208M1196.5 205.5V208M1202.5 202V208M1207.5 205.5V208M1213.5 205.5V208M1219.5 205.5V208M1224.5 205.5V208M1230.5 191V208M1236.5 205.5V208M1242.5 205.5V208M1247.5 205.5V208M1253.5 205.5V208M1259.5 202V208M1264.5 205.5V208M1270.5 205.5V208M235 208H1273.5"/>
<path d="M232.5 214.5H235M232.5 219.5H235M232.5 225.5H235M229 231.5H235M232.5 236.5H235M232.5 242.5H235M232.5 248.5H235M232.5 253.5H235M218.5 259.5H235M232.5 265.5H235M232.5 270.5H235M232.5 276.5H235M232.5 282.5H235M229 287.5H235M232.5 293.5H235M232.5 299.5H235M232.5 304.5H235M232.5 310.5H235M218.5 316.5H235M232.5 321.5H235M232.5 327.5H235M232.5 333.5H235M232.5 338.5H235M229 344.5H235M232.5 350.5H235M232.5 355.5H235M232.5 361.5H235M232.5 367.5H235M218.5 372.5H235M232.5 378.5H235M232.5 384.5H235M232.5 389.5H235M232.5 395.5H235M229 401.5H235M232.5 406.5H235M232.5 412.5H235M232.5 418.5H235M232.5 423.5H235M218.5 429.5H235M232.5 435.5H235M232.5 441.5H235M232.5 446.5H235M232.5 452.5H235M229 458.5H235M232.5 463.5H235M232.5 469.5H235M232.5 475.5H235M232.5 480.5H235M218.5 486.5H235M232.5 492.5H235M232.5 497.5H235M232.5 503.5H235M232.5 509.5H235M229 514.5H235M232.5 520.5H235M232.5 526.5H235M232.5 531.5H235M232.5 537.5H235M218.5 543.5H235M232.5 548.5H235M232.5 554.5H235M232.5 560.5H235M232.5 565.5H235M229 571.5H235M232.5 577.5H235M232.5 582.5H235M232.5 588.5H235M232.5 594.5H235M218.5 599.5H235M232.5 605.5H235M232.5 611.5H235M232.5 616.5H235M232.5 622.5H235M229 627.5H235M235 208V628.5"/>
</g>
<g font-family="Liberation Sans, sans-serif" font-size="12" fill="#000" shape-rendering="auto" text-rendering="geometricPrecision">
<text x="268.6" y="203.6">40</text>
<text x="325.6" y="203.6">30</text>
<text x="381.6" y="203.6">20</text>
<text x="438.6" y="203.6">10</text>
<text x="495.6" y="203.6">0</text>
<text x="552.6" y="203.6">10</text>
<text x="608.6" y="203.6">20</text>
<text x="665.6" y="203.6">30</text>
<text x="722.6" y="203.6">40</text>
<text x="778.6" y="203.6">50</text>
<text x="835.6" y="203.6">60</text>
<text x="892.6" y="203.6">70</text>
<text x="949.6" y="203.6">80</text>
<text x="1005.6" y="203.6">90</text>
<text x="1062.6" y="203.6">100</text>
<text x="1119.6" y="203.6">110</text>
<text x="1175.6" y="203.6">120</text>
<text x="1232.6" y="203.6">130</text>
<text transform="translate(228.9 257.4) rotate(-90)">0</text>
<text transform="translate(228.9 314.4) rotate(-90)">10</text>
<text transform="translate(228.9 370.4) rotate(-90)">20</text>
<text transform="translate(228.9 427.4) rotate(-90)">30</text>
<text transform="translate(228.9 484.4) rotate(-90)">40</text>
<text transform="translate(228.9 541.4) rotate(-90)">50</text>
<text transform="translate(228.9 597.4) rotate(-90)">60</text>
</g>
<g shape-rendering="auto">
<path d="M494 264.3H1016M494 573.3H1016M498.2 260V577.6M1011.5 260V577.6" fill="none" stroke="#000" stroke-width="1.2" stroke-dasharray="9 6 3 6"/>
<defs><g id="sc"><path d="M-.8 .9L5 -.9L12.9 -3.3L5 -.1Z M-.8 -.9L5 .9L12.9 3.3L5 .1Z" fill="#0a0a0a" stroke="#0a0a0a" stroke-width=".9" stroke-linejoin="round"/><ellipse cx="-3.7" cy="-2.3" rx="2.8" ry="1.6" transform="rotate(16 -3.7 -2.3)" fill="none" stroke="#111" stroke-width=".85"/><ellipse cx="-3.7" cy="2.3" rx="2.8" ry="1.6" transform="rotate(-16 -3.7 2.3)" fill="none" stroke="#111" stroke-width=".85"/></g></defs>
<use href="#sc" transform="translate(478.6 263.8)"/>
<use href="#sc" transform="translate(478.6 572.8)"/>
<use href="#sc" transform="translate(1031.4 264.6) rotate(180)"/>
<use href="#sc" transform="translate(1031.4 573.4) rotate(180)"/>
<use href="#sc" transform="translate(498.6 244.4) rotate(90)"/>
<use href="#sc" transform="translate(1011.4 244.4) rotate(90)"/>
<use href="#sc" transform="translate(498.6 593) rotate(-90)"/>
<use href="#sc" transform="translate(1011.4 593) rotate(-90)"/>
</g>
</svg>
<div class="t hei" style="left:568.8px;top:301.1px;font-size:18.6px;line-height:18.6px;color:#1a1a1a;letter-spacing:1px;">姓名</div>
<div class="t hei" style="left:568.8px;top:329.5px;font-size:11.4px;line-height:11.4px;color:#1a1a1a;letter-spacing:1.1px;">职务/职称</div>
<div class="t hei" style="left:568.6px;top:358.5px;font-size:22.2px;line-height:22.2px;color:#8c2934;letter-spacing:1.6px;">公司名称</div>
<div class="t hei" style="left:568.8px;top:387.5px;font-size:11.4px;line-height:11.4px;color:#1a1a1a;letter-spacing:.85px;">公司/个人信息</div>
<div class="t hei" style="left:568.6px;top:421.7px;font-size:11.4px;line-height:11.4px;color:#1a1a1a;letter-spacing:.85px;">地址1</div>
<div class="t hei" style="left:568.6px;top:441.6px;font-size:11.4px;line-height:11.4px;color:#1a1a1a;letter-spacing:.85px;">地址2</div>
<div class="t hei" style="left:568.6px;top:463.5px;font-size:11.4px;line-height:11.4px;color:#1a1a1a;letter-spacing:.85px;">电话</div>
<div class="t hei" style="left:568.6px;top:483.5px;font-size:11.4px;line-height:11.4px;color:#1a1a1a;letter-spacing:.85px;">手机</div>
<div class="t hei" style="left:568.6px;top:504.9px;font-size:11.4px;line-height:11.4px;color:#1a1a1a;letter-spacing:.85px;">传真/其他</div>
<div class="t hei" style="left:568.6px;top:525.5px;font-size:11.4px;line-height:11.4px;color:#1a1a1a;letter-spacing:.85px;">电子邮箱/其他</div>
<div class="t hei" style="left:568.6px;top:544.8px;font-size:11.4px;line-height:11.4px;color:#1a1a1a;letter-spacing:.85px;">网站/其他</div>
<!-- status + bottom panel -->
<style>.cal{font-size:12px;white-space:normal;transform-origin:0 0;font-weight:700;color:#6e6e6e}.cal2 i{font-size:12.5px!important;letter-spacing:-2.2px!important}.cal i,.cal b{display:inline-block;width:14.28%;text-align:center;font-style:normal;font-weight:700;letter-spacing:-2.6px;font-size:15px}.cal b{color:#e07680}</style>
<div class="a" style="left:219px;top:628.5px;width:1054.5px;height:20.3px;background:#e9e7b9"></div>
<div class="a" style="left:219px;top:648.8px;width:1054.5px;height:114.7px;background:#fff"></div>
<div class="t ui" style="left:236.5px;top:633px;font-size:13px;color:#000;letter-spacing:0">名片尺寸<span style="letter-spacing:-.8px">(</span>毫米<span style="letter-spacing:-.8px">) 92.00 * 56.00</span></div>
<div class="a" style="left:226.5px;top:659px;width:131.3px;height:99.4px;background:#f9e4b7"></div>
<div class="t ui" style="left:236.5px;top:663px;font-size:13px">正面</div>
<div class="t ui" style="left:367px;top:663px;font-size:13px">反面</div>
<div class="t ui" style="left:497.5px;top:663px;font-size:13px">反面样式<span style="letter-spacing:-.8px">(</span>双击缩略图以选择您喜欢的样式<span style="letter-spacing:-.8px">)</span></div>
<div class="a" style="left:234px;top:681px;width:117.2px;height:70.8px;background:#fff;border:1.3px solid #000"></div>
<div class="a" style="left:364.8px;top:681px;width:117.2px;height:70.8px;background:#fff;border:1.3px solid #000"></div>
<div class="a" style="left:515px;top:682px;width:113.8px;height:67.6px;background:#fff;border:1.8px solid #ece5bb"></div>
<div class="a" style="left:637px;top:683px;width:113.2px;height:66.6px;background:#fff;border:1.3px solid #000"></div>
<div class="a" style="left:758px;top:683px;width:113.2px;height:66.6px;background:#fff;border:1.3px solid #000"></div>
<div class="a" style="left:879.2px;top:683px;width:113px;height:66.6px;background:#fff;border:1.3px solid #000"></div>
<div class="a" style="left:496.2px;top:691.4px;width:12px;height:51px;border-radius:3px;background:linear-gradient(90deg,#c4c4c4,#e0e0e0 45%,#d0d0d0 70%,#b8b8b8)"></div>
<div class="a" style="left:1247.4px;top:691.4px;width:12px;height:50px;border-radius:3px;background:linear-gradient(90deg,#c4c4c4,#e0e0e0 45%,#d0d0d0 70%,#b8b8b8)"></div>
<svg style="left:490px;top:690px" width="780" height="60" viewBox="490 690 780 60"><path d="M497.6 716.8L506.2 711.6V722Z" fill="#fff"/><path d="M1258 716.4L1249.4 711.2V721.6Z" fill="#fff"/></svg>
<div class="t hei" style="left:250px;top:689.4px;font-size:12px;line-height:12px;color:#111;transform:scale(0.3833);transform-origin:0 0;font-weight:700;">姓名</div>
<div class="t hei" style="left:250px;top:695.6px;font-size:12px;line-height:12px;color:#111;transform:scale(0.2333);transform-origin:0 0;font-weight:700;">职务/职称</div>
<div class="t hei" style="left:250px;top:702.6px;font-size:12px;line-height:12px;color:#8c2934;transform:scale(0.4500);transform-origin:0 0;font-weight:700;">公司名称</div>
<div class="t hei" style="left:250px;top:708.8px;font-size:12px;line-height:12px;color:#111;transform:scale(0.2333);transform-origin:0 0;font-weight:700;">公司/个人信息</div>
<div class="t hei" style="left:250px;top:716.6px;font-size:12px;line-height:12px;color:#111;transform:scale(0.2333);transform-origin:0 0;font-weight:700;">地址1</div>
<div class="t hei" style="left:250px;top:720.8px;font-size:12px;line-height:12px;color:#111;transform:scale(0.2333);transform-origin:0 0;font-weight:700;">地址2</div>
<div class="t hei" style="left:250px;top:725.6px;font-size:12px;line-height:12px;color:#111;transform:scale(0.2333);transform-origin:0 0;font-weight:700;">电话</div>
<div class="t hei" style="left:250px;top:729.8px;font-size:12px;line-height:12px;color:#111;transform:scale(0.2333);transform-origin:0 0;font-weight:700;">手机</div>
<div class="t hei" style="left:250px;top:734.6px;font-size:12px;line-height:12px;color:#111;transform:scale(0.2333);transform-origin:0 0;font-weight:700;">传真/其他</div>
<div class="t hei" style="left:250px;top:739.6px;font-size:12px;line-height:12px;color:#111;transform:scale(0.2333);transform-origin:0 0;font-weight:700;">电子邮箱/其他</div>
<div class="t hei" style="left:250px;top:743.6px;font-size:12px;line-height:12px;color:#111;transform:scale(0.2333);transform-origin:0 0;font-weight:700;">网站/其他</div>
<div class="t song" style="left:543px;top:700.8px;font-size:30.5px;line-height:32px;color:#000;letter-spacing:2.2px">空白</div>
<div class="t hei" style="left:652.7px;top:694px;font-size:12px;line-height:12px;color:#333;transform:scale(0.3833);transform-origin:0 0;font-weight:400;">Full Name</div>
<div class="t hei" style="left:652.7px;top:699.9px;font-size:12px;line-height:12px;color:#333;transform:scale(0.2333);transform-origin:0 0;font-weight:400;">Job Title</div>
<div class="t hei" style="left:652.7px;top:706.1px;font-size:12px;line-height:12px;color:#b0313f;transform:scale(0.4333);transform-origin:0 0;font-weight:400;">COMPANY NAME</div>
<div class="t hei" style="left:652.7px;top:711.9px;font-size:12px;line-height:12px;color:#333;transform:scale(0.2333);transform-origin:0 0;font-weight:400;">Company, Personal Message</div>
<div class="t hei" style="left:652.7px;top:717.5px;font-size:12px;line-height:12px;color:#222;transform:scale(0.2250);transform-origin:0 0;font-weight:700;">Address Line1</div>
<div class="t hei" style="left:652.7px;top:721.26px;font-size:12px;line-height:12px;color:#222;transform:scale(0.2250);transform-origin:0 0;font-weight:700;">Address Line2</div>
<div class="t hei" style="left:652.7px;top:725.02px;font-size:12px;line-height:12px;color:#222;transform:scale(0.2250);transform-origin:0 0;font-weight:700;">Phone / Other</div>
<div class="t hei" style="left:652.7px;top:728.78px;font-size:12px;line-height:12px;color:#222;transform:scale(0.2250);transform-origin:0 0;font-weight:700;">Fax / Other</div>
<div class="t hei" style="left:652.7px;top:732.54px;font-size:12px;line-height:12px;color:#222;transform:scale(0.2250);transform-origin:0 0;font-weight:700;">Email / Other</div>
<div class="t hei" style="left:652.7px;top:736.3px;font-size:12px;line-height:12px;color:#222;transform:scale(0.2250);transform-origin:0 0;font-weight:700;">Web / Other</div>
<div class="a" style="left:762px;top:685.3px;width:17px;height:2.2px;background:#c8323c"></div><div class="a" style="left:794px;top:685.3px;width:13.5px;height:2.2px;background:#c8323c"></div>
<div class="t hei" style="left:780px;top:685.2px;font-size:12px;line-height:12px;color:#c8323c;transform:scale(0.1833);transform-origin:0 0;font-weight:400;">Calendar 2009</div>
<div class="a" style="left:762.6px;top:691.6999999999999px;width:20.4px;height:.5px;background:#666"></div>
<div class="t hei" style="left:762.6px;top:689.0999999999999px;font-size:12px;line-height:12px;color:#000;transform:scale(0.2000);transform-origin:0 0;font-weight:700;">January</div>
<div class="t hei" style="left:781.0px;top:688.9px;font-size:12px;line-height:12px;color:#000;transform:scale(0.2167);transform-origin:0 0;font-weight:700;">1</div>
<div class="t hei cal" style="left:762.6px;top:693.0999999999999px;width:116.6px;line-height:13.6px;transform:scale(0.1750)"><b>&nbsp;</b><i>&nbsp;</i><i>&nbsp;</i><i>&nbsp;</i><i>1</i><i>2</i><b>3</b><br><b>4</b><i>5</i><i>6</i><i>7</i><i>8</i><i>9</i><b>10</b><br><b>11</b><i>12</i><i>13</i><i>14</i><i>15</i><i>16</i><b>17</b><br><b>18</b><i>19</i><i>20</i><i>21</i><i>22</i><i>23</i><b>24</b><br><b>25</b><i>26</i><i>27</i><i>28</i><i>29</i><i>30</i><b>31</b></div>
<div class="a" style="left:790px;top:691.6999999999999px;width:20.4px;height:.5px;background:#666"></div>
<div class="t hei" style="left:790px;top:689.0999999999999px;font-size:12px;line-height:12px;color:#000;transform:scale(0.2000);transform-origin:0 0;font-weight:700;">February</div>
<div class="t hei" style="left:808.4px;top:688.9px;font-size:12px;line-height:12px;color:#000;transform:scale(0.2167);transform-origin:0 0;font-weight:700;">2</div>
<div class="t hei cal" style="left:790px;top:693.0999999999999px;width:116.6px;line-height:13.6px;transform:scale(0.1750)"><b>1</b><i>2</i><i>3</i><i>4</i><i>5</i><i>6</i><b>7</b><br><b>8</b><i>9</i><i>10</i><i>11</i><i>12</i><i>13</i><b>14</b><br><b>15</b><i>16</i><i>17</i><i>18</i><i>19</i><i>20</i><b>21</b><br><b>22</b><i>23</i><i>24</i><i>25</i><i>26</i><i>27</i><b>28</b></div>
<div class="a" style="left:817.2px;top:691.6999999999999px;width:20.4px;height:.5px;background:#666"></div>
<div class="t hei" style="left:817.2px;top:689.0999999999999px;font-size:12px;line-height:12px;color:#000;transform:scale(0.2000);transform-origin:0 0;font-weight:700;">March</div>
<div class="t hei" style="left:835.6px;top:688.9px;font-size:12px;line-height:12px;color:#000;transform:scale(0.2167);transform-origin:0 0;font-weight:700;">3</div>
<div class="t hei cal" style="left:817.2px;top:693.0999999999999px;width:116.6px;line-height:13.6px;transform:scale(0.1750)"><b>1</b><i>2</i><i>3</i><i>4</i><i>5</i><i>6</i><b>7</b><br><b>8</b><i>9</i><i>10</i><i>11</i><i>12</i><i>13</i><b>14</b><br><b>15</b><i>16</i><i>17</i><i>18</i><i>19</i><i>20</i><b>21</b><br><b>22</b><i>23</i><i>24</i><i>25</i><i>26</i><i>27</i><b>28</b><br><b>29</b><i>30</i><i>31</i><i>&nbsp;</i><i>&nbsp;</i><i>&nbsp;</i><b>&nbsp;</b></div>
<div class="a" style="left:845px;top:691.6999999999999px;width:20.4px;height:.5px;background:#666"></div>
<div class="t hei" style="left:845px;top:689.0999999999999px;font-size:12px;line-height:12px;color:#000;transform:scale(0.2000);transform-origin:0 0;font-weight:700;">April</div>
<div class="t hei" style="left:863.4px;top:688.9px;font-size:12px;line-height:12px;color:#000;transform:scale(0.2167);transform-origin:0 0;font-weight:700;">4</div>
<div class="t hei cal" style="left:845px;top:693.0999999999999px;width:116.6px;line-height:13.6px;transform:scale(0.1750)"><b>&nbsp;</b><i>&nbsp;</i><i>&nbsp;</i><i>1</i><i>2</i><i>3</i><b>4</b><br><b>5</b><i>6</i><i>7</i><i>8</i><i>9</i><i>10</i><b>11</b><br><b>12</b><i>13</i><i>14</i><i>15</i><i>16</i><i>17</i><b>18</b><br><b>19</b><i>20</i><i>21</i><i>22</i><i>23</i><i>24</i><b>25</b><br><b>26</b><i>27</i><i>28</i><i>29</i><i>30</i><i>&nbsp;</i><b>&nbsp;</b></div>
<div class="a" style="left:762.6px;top:711.3px;width:20.4px;height:.5px;background:#666"></div>
<div class="t hei" style="left:762.6px;top:708.6999999999999px;font-size:12px;line-height:12px;color:#000;transform:scale(0.2000);transform-origin:0 0;font-weight:700;">May</div>
<div class="t hei" style="left:781.0px;top:708.5px;font-size:12px;line-height:12px;color:#000;transform:scale(0.2167);transform-origin:0 0;font-weight:700;">5</div>
<div class="t hei cal" style="left:762.6px;top:712.6999999999999px;width:116.6px;line-height:13.6px;transform:scale(0.1750)"><b>&nbsp;</b><i>&nbsp;</i><i>&nbsp;</i><i>&nbsp;</i><i>&nbsp;</i><i>1</i><b>2</b><br><b>3</b><i>4</i><i>5</i><i>6</i><i>7</i><i>8</i><b>9</b><br><b>10</b><i>11</i><i>12</i><i>13</i><i>14</i><i>15</i><b>16</b><br><b>17</b><i>18</i><i>19</i><i>20</i><i>21</i><i>22</i><b>23</b><br><b>24</b><i>25</i><i>26</i><i>27</i><i>28</i><i>29</i><b>30</b><br><b>31</b><i>&nbsp;</i><i>&nbsp;</i><i>&nbsp;</i><i>&nbsp;</i><i>&nbsp;</i><b>&nbsp;</b></div>
<div class="a" style="left:790px;top:711.3px;width:20.4px;height:.5px;background:#666"></div>
<div class="t hei" style="left:790px;top:708.6999999999999px;font-size:12px;line-height:12px;color:#000;transform:scale(0.2000);transform-origin:0 0;font-weight:700;">June</div>
<div class="t hei" style="left:808.4px;top:708.5px;font-size:12px;line-height:12px;color:#000;transform:scale(0.2167);transform-origin:0 0;font-weight:700;">6</div>
<div class="t hei cal" style="left:790px;top:712.6999999999999px;width:116.6px;line-height:13.6px;transform:scale(0.1750)"><b>&nbsp;</b><i>1</i><i>2</i><i>3</i><i>4</i><i>5</i><b>6</b><br><b>7</b><i>8</i><i>9</i><i>10</i><i>11</i><i>12</i><b>13</b><br><b>14</b><i>15</i><i>16</i><i>17</i><i>18</i><i>19</i><b>20</b><br><b>21</b><i>22</i><i>23</i><i>24</i><i>25</i><i>26</i><b>27</b><br><b>28</b><i>29</i><i>30</i><i>&nbsp;</i><i>&nbsp;</i><i>&nbsp;</i><b>&nbsp;</b></div>
<div class="a" style="left:817.2px;top:711.3px;width:20.4px;height:.5px;background:#666"></div>
<div class="t hei" style="left:817.2px;top:708.6999999999999px;font-size:12px;line-height:12px;color:#000;transform:scale(0.2000);transform-origin:0 0;font-weight:700;">July</div>
<div class="t hei" style="left:835.6px;top:708.5px;font-size:12px;line-height:12px;color:#000;transform:scale(0.2167);transform-origin:0 0;font-weight:700;">7</div>
<div class="t hei cal" style="left:817.2px;top:712.6999999999999px;width:116.6px;line-height:13.6px;transform:scale(0.1750)"><b>&nbsp;</b><i>&nbsp;</i><i>&nbsp;</i><i>1</i><i>2</i><i>3</i><b>4</b><br><b>5</b><i>6</i><i>7</i><i>8</i><i>9</i><i>10</i><b>11</b><br><b>12</b><i>13</i><i>14</i><i>15</i><i>16</i><i>17</i><b>18</b><br><b>19</b><i>20</i><i>21</i><i>22</i><i>23</i><i>24</i><b>25</b><br><b>26</b><i>27</i><i>28</i><i>29</i><i>30</i><i>31</i><b>&nbsp;</b></div>
<div class="a" style="left:845px;top:711.3px;width:20.4px;height:.5px;background:#666"></div>
<div class="t hei" style="left:845px;top:708.6999999999999px;font-size:12px;line-height:12px;color:#000;transform:scale(0.2000);transform-origin:0 0;font-weight:700;">August</div>
<div class="t hei" style="left:863.4px;top:708.5px;font-size:12px;line-height:12px;color:#000;transform:scale(0.2167);transform-origin:0 0;font-weight:700;">8</div>
<div class="t hei cal" style="left:845px;top:712.6999999999999px;width:116.6px;line-height:13.6px;transform:scale(0.1750)"><b>&nbsp;</b><i>&nbsp;</i><i>&nbsp;</i><i>&nbsp;</i><i>&nbsp;</i><i>&nbsp;</i><b>1</b><br><b>2</b><i>3</i><i>4</i><i>5</i><i>6</i><i>7</i><b>8</b><br><b>9</b><i>10</i><i>11</i><i>12</i><i>13</i><i>14</i><b>15</b><br><b>16</b><i>17</i><i>18</i><i>19</i><i>20</i><i>21</i><b>22</b><br><b>23</b><i>24</i><i>25</i><i>26</i><i>27</i><i>28</i><b>29</b><br><b>30</b><i>31</i><i>&nbsp;</i><i>&nbsp;</i><i>&nbsp;</i><i>&nbsp;</i><b>&nbsp;</b></div>
<div class="a" style="left:762.6px;top:731.6px;width:20.4px;height:.5px;background:#666"></div>
<div class="t hei" style="left:762.6px;top:729.0px;font-size:12px;line-height:12px;color:#000;transform:scale(0.2000);transform-origin:0 0;font-weight:700;">September</div>
<div class="t hei" style="left:781.0px;top:728.8000000000001px;font-size:12px;line-height:12px;color:#000;transform:scale(0.2167);transform-origin:0 0;font-weight:700;">9</div>
<div class="t hei cal" style="left:762.6px;top:733.0px;width:116.6px;line-height:13.6px;transform:scale(0.1750)"><b>&nbsp;</b><i>&nbsp;</i><i>1</i><i>2</i><i>3</i><i>4</i><b>5</b><br><b>6</b><i>7</i><i>8</i><i>9</i><i>10</i><i>11</i><b>12</b><br><b>13</b><i>14</i><i>15</i><i>16</i><i>17</i><i>18</i><b>19</b><br><b>20</b><i>21</i><i>22</i><i>23</i><i>24</i><i>25</i><b>26</b><br><b>27</b><i>28</i><i>29</i><i>30</i><i>&nbsp;</i><i>&nbsp;</i><b>&nbsp;</b></div>
<div class="a" style="left:790px;top:731.6px;width:20.4px;height:.5px;background:#666"></div>
<div class="t hei" style="left:790px;top:729.0px;font-size:12px;line-height:12px;color:#000;transform:scale(0.2000);transform-origin:0 0;font-weight:700;">October</div>
<div class="t hei" style="left:808.4px;top:728.8000000000001px;font-size:12px;line-height:12px;color:#000;transform:scale(0.2167);transform-origin:0 0;font-weight:700;">10</div>
<div class="t hei cal" style="left:790px;top:733.0px;width:116.6px;line-height:13.6px;transform:scale(0.1750)"><b>&nbsp;</b><i>&nbsp;</i><i>&nbsp;</i><i>&nbsp;</i><i>1</i><i>2</i><b>3</b><br><b>4</b><i>5</i><i>6</i><i>7</i><i>8</i><i>9</i><b>10</b><br><b>11</b><i>12</i><i>13</i><i>14</i><i>15</i><i>16</i><b>17</b><br><b>18</b><i>19</i><i>20</i><i>21</i><i>22</i><i>23</i><b>24</b><br><b>25</b><i>26</i><i>27</i><i>28</i><i>29</i><i>30</i><b>31</b></div>
<div class="a" style="left:817.2px;top:731.6px;width:20.4px;height:.5px;background:#666"></div>
<div class="t hei" style="left:817.2px;top:729.0px;font-size:12px;line-height:12px;color:#000;transform:scale(0.2000);transform-origin:0 0;font-weight:700;">November</div>
<div class="t hei" style="left:835.6px;top:728.8000000000001px;font-size:12px;line-height:12px;color:#000;transform:scale(0.2167);transform-origin:0 0;font-weight:700;">11</div>
<div class="t hei cal" style="left:817.2px;top:733.0px;width:116.6px;line-height:13.6px;transform:scale(0.1750)"><b>1</b><i>2</i><i>3</i><i>4</i><i>5</i><i>6</i><b>7</b><br><b>8</b><i>9</i><i>10</i><i>11</i><i>12</i><i>13</i><b>14</b><br><b>15</b><i>16</i><i>17</i><i>18</i><i>19</i><i>20</i><b>21</b><br><b>22</b><i>23</i><i>24</i><i>25</i><i>26</i><i>27</i><b>28</b><br><b>29</b><i>30</i><i>&nbsp;</i><i>&nbsp;</i><i>&nbsp;</i><i>&nbsp;</i><b>&nbsp;</b></div>
<div class="a" style="left:845px;top:731.6px;width:20.4px;height:.5px;background:#666"></div>
<div class="t hei" style="left:845px;top:729.0px;font-size:12px;line-height:12px;color:#000;transform:scale(0.2000);transform-origin:0 0;font-weight:700;">December</div>
<div class="t hei" style="left:863.4px;top:728.8000000000001px;font-size:12px;line-height:12px;color:#000;transform:scale(0.2167);transform-origin:0 0;font-weight:700;">12</div>
<div class="t hei cal" style="left:845px;top:733.0px;width:116.6px;line-height:13.6px;transform:scale(0.1750)"><b>&nbsp;</b><i>&nbsp;</i><i>1</i><i>2</i><i>3</i><i>4</i><b>5</b><br><b>6</b><i>7</i><i>8</i><i>9</i><i>10</i><i>11</i><b>12</b><br><b>13</b><i>14</i><i>15</i><i>16</i><i>17</i><i>18</i><b>19</b><br><b>20</b><i>21</i><i>22</i><i>23</i><i>24</i><i>25</i><b>26</b><br><b>27</b><i>28</i><i>29</i><i>30</i><i>31</i><i>&nbsp;</i><b>&nbsp;</b></div>
<div class="t" style="left:888px;top:695.5px;font:900 10.5px 'Liberation Serif',serif;color:#555;transform:scale(1.15,1);transform-origin:0 0">2</div>
<div class="t" style="left:888px;top:706.6px;font:900 10.5px 'Liberation Serif',serif;color:#555;transform:scale(1.15,1);transform-origin:0 0">0</div>
<div class="t" style="left:888px;top:717.8px;font:900 10.5px 'Liberation Serif',serif;color:#555;transform:scale(1.15,1);transform-origin:0 0">0</div>
<div class="t" style="left:888px;top:729px;font:900 10.5px 'Liberation Serif',serif;color:#555;transform:scale(1.15,1);transform-origin:0 0">9</div>
<div class="t hei" style="left:901.4px;top:690px;font-size:12px;line-height:12px;color:#999;transform:scale(0.3500);transform-origin:0 0;font-weight:400;width:50.3px;white-space:normal;text-align:center;">一月</div>
<div class="t hei cal cal2" style="left:901.4px;top:695.2px;width:105.6px;line-height:13.2px;color:#969696;transform:scale(0.1667)"><i>日</i><i>一</i><i>二</i><i>三</i><i>四</i><i>五</i><i>六</i><br><i>&nbsp;</i><i>&nbsp;</i><i>&nbsp;</i><i>&nbsp;</i><i>1</i><i>2</i><i>3</i><br><i>4</i><i>5</i><i>6</i><i>7</i><i>8</i><i>9</i><i>10</i><br><i>11</i><i>12</i><i>13</i><i>14</i><i>15</i><i>16</i><i>17</i><br><i>18</i><i>19</i><i>20</i><i>21</i><i>22</i><i>23</i><i>24</i><br><i>25</i><i>26</i><i>27</i><i>28</i><i>29</i><i>30</i><i>31</i></div>
<div class="t hei" style="left:923px;top:690px;font-size:12px;line-height:12px;color:#999;transform:scale(0.3500);transform-origin:0 0;font-weight:400;width:50.3px;white-space:normal;text-align:center;">二月</div>
<div class="t hei cal cal2" style="left:923px;top:695.2px;width:105.6px;line-height:13.2px;color:#969696;transform:scale(0.1667)"><i>日</i><i>一</i><i>二</i><i>三</i><i>四</i><i>五</i><i>六</i><br><i>1</i><i>2</i><i>3</i><i>4</i><i>5</i><i>6</i><i>7</i><br><i>8</i><i>9</i><i>10</i><i>11</i><i>12</i><i>13</i><i>14</i><br><i>15</i><i>16</i><i>17</i><i>18</i><i>19</i><i>20</i><i>21</i><br><i>22</i><i>23</i><i>24</i><i>25</i><i>26</i><i>27</i><i>28</i></div>
<div class="t hei" style="left:944.8px;top:690px;font-size:12px;line-height:12px;color:#999;transform:scale(0.3500);transform-origin:0 0;font-weight:400;width:50.3px;white-space:normal;text-align:center;">三月</div>
<div class="t hei cal cal2" style="left:944.8px;top:695.2px;width:105.6px;line-height:13.2px;color:#969696;transform:scale(0.1667)"><i>日</i><i>一</i><i>二</i><i>三</i><i>四</i><i>五</i><i>六</i><br><i>1</i><i>2</i><i>3</i><i>4</i><i>5</i><i>6</i><i>7</i><br><i>8</i><i>9</i><i>10</i><i>11</i><i>12</i><i>13</i><i>14</i><br><i>15</i><i>16</i><i>17</i><i>18</i><i>19</i><i>20</i><i>21</i><br><i>22</i><i>23</i><i>24</i><i>25</i><i>26</i><i>27</i><i>28</i><br><i>29</i><i>30</i><i>31</i><i>&nbsp;</i><i>&nbsp;</i><i>&nbsp;</i><i>&nbsp;</i></div>
<div class="t hei" style="left:966.6px;top:690px;font-size:12px;line-height:12px;color:#999;transform:scale(0.3500);transform-origin:0 0;font-weight:400;width:50.3px;white-space:normal;text-align:center;">四月</div>
<div class="t hei cal cal2" style="left:966.6px;top:695.2px;width:105.6px;line-height:13.2px;color:#969696;transform:scale(0.1667)"><i>日</i><i>一</i><i>二</i><i>三</i><i>四</i><i>五</i><i>六</i><br><i>&nbsp;</i><i>&nbsp;</i><i>&nbsp;</i><i>1</i><i>2</i><i>3</i><i>4</i><br><i>5</i><i>6</i><i>7</i><i>8</i><i>9</i><i>10</i><i>11</i><br><i>12</i><i>13</i><i>14</i><i>15</i><i>16</i><i>17</i><i>18</i><br><i>19</i><i>20</i><i>21</i><i>22</i><i>23</i><i>24</i><i>25</i><br><i>26</i><i>27</i><i>28</i><i>29</i><i>30</i><i>&nbsp;</i><i>&nbsp;</i></div>
<div class="t hei" style="left:901.4px;top:708.4px;font-size:12px;line-height:12px;color:#999;transform:scale(0.3500);transform-origin:0 0;font-weight:400;width:50.3px;white-space:normal;text-align:center;">五月</div>
<div class="t hei cal cal2" style="left:901.4px;top:713.6px;width:105.6px;line-height:13.2px;color:#969696;transform:scale(0.1667)"><i>日</i><i>一</i><i>二</i><i>三</i><i>四</i><i>五</i><i>六</i><br><i>&nbsp;</i><i>&nbsp;</i><i>&nbsp;</i><i>&nbsp;</i><i>&nbsp;</i><i>1</i><i>2</i><br><i>3</i><i>4</i><i>5</i><i>6</i><i>7</i><i>8</i><i>9</i><br><i>10</i><i>11</i><i>12</i><i>13</i><i>14</i><i>15</i><i>16</i><br><i>17</i><i>18</i><i>19</i><i>20</i><i>21</i><i>22</i><i>23</i><br><i>24</i><i>25</i><i>26</i><i>27</i><i>28</i><i>29</i><i>30</i><br><i>31</i><i>&nbsp;</i><i>&nbsp;</i><i>&nbsp;</i><i>&nbsp;</i><i>&nbsp;</i><i>&nbsp;</i></div>
<div class="t hei" style="left:923px;top:708.4px;font-size:12px;line-height:12px;color:#999;transform:scale(0.3500);transform-origin:0 0;font-weight:400;width:50.3px;white-space:normal;text-align:center;">六月</div>
<div class="t hei cal cal2" style="left:923px;top:713.6px;width:105.6px;line-height:13.2px;color:#969696;transform:scale(0.1667)"><i>日</i><i>一</i><i>二</i><i>三</i><i>四</i><i>五</i><i>六</i><br><i>&nbsp;</i><i>1</i><i>2</i><i>3</i><i>4</i><i>5</i><i>6</i><br><i>7</i><i>8</i><i>9</i><i>10</i><i>11</i><i>12</i><i>13</i><br><i>14</i><i>15</i><i>16</i><i>17</i><i>18</i><i>19</i><i>20</i><br><i>21</i><i>22</i><i>23</i><i>24</i><i>25</i><i>26</i><i>27</i><br><i>28</i><i>29</i><i>30</i><i>&nbsp;</i><i>&nbsp;</i><i>&nbsp;</i><i>&nbsp;</i></div>
<div class="t hei" style="left:944.8px;top:708.4px;font-size:12px;line-height:12px;color:#999;transform:scale(0.3500);transform-origin:0 0;font-weight:400;width:50.3px;white-space:normal;text-align:center;">七月</div>
<div class="t hei cal cal2" style="left:944.8px;top:713.6px;width:105.6px;line-height:13.2px;color:#969696;transform:scale(0.1667)"><i>日</i><i>一</i><i>二</i><i>三</i><i>四</i><i>五</i><i>六</i><br><i>&nbsp;</i><i>&nbsp;</i><i>&nbsp;</i><i>1</i><i>2</i><i>3</i><i>4</i><br><i>5</i><i>6</i><i>7</i><i>8</i><i>9</i><i>10</i><i>11</i><br><i>12</i><i>13</i><i>14</i><i>15</i><i>16</i><i>17</i><i>18</i><br><i>19</i><i>20</i><i>21</i><i>22</i><i>23</i><i>24</i><i>25</i><br><i>26</i><i>27</i><i>28</i><i>29</i><i>30</i><i>31</i><i>&nbsp;</i></div>
<div class="t hei" style="left:966.6px;top:708.4px;font-size:12px;line-height:12px;color:#999;transform:scale(0.3500);transform-origin:0 0;font-weight:400;width:50.3px;white-space:normal;text-align:center;">八月</div>
<div class="t hei cal cal2" style="left:966.6px;top:713.6px;width:105.6px;line-height:13.2px;color:#969696;transform:scale(0.1667)"><i>日</i><i>一</i><i>二</i><i>三</i><i>四</i><i>五</i><i>六</i><br><i>&nbsp;</i><i>&nbsp;</i><i>&nbsp;</i><i>&nbsp;</i><i>&nbsp;</i><i>&nbsp;</i><i>1</i><br><i>2</i><i>3</i><i>4</i><i>5</i><i>6</i><i>7</i><i>8</i><br><i>9</i><i>10</i><i>11</i><i>12</i><i>13</i><i>14</i><i>15</i><br><i>16</i><i>17</i><i>18</i><i>19</i><i>20</i><i>21</i><i>22</i><br><i>23</i><i>24</i><i>25</i><i>26</i><i>27</i><i>28</i><i>29</i><br><i>30</i><i>31</i><i>&nbsp;</i><i>&nbsp;</i><i>&nbsp;</i><i>&nbsp;</i><i>&nbsp;</i></div>
<div class="t hei" style="left:901.4px;top:727.6px;font-size:12px;line-height:12px;color:#999;transform:scale(0.3500);transform-origin:0 0;font-weight:400;width:50.3px;white-space:normal;text-align:center;">九月</div>
<div class="t hei cal cal2" style="left:901.4px;top:732.8000000000001px;width:105.6px;line-height:13.2px;color:#969696;transform:scale(0.1667)"><i>日</i><i>一</i><i>二</i><i>三</i><i>四</i><i>五</i><i>六</i><br><i>&nbsp;</i><i>&nbsp;</i><i>1</i><i>2</i><i>3</i><i>4</i><i>5</i><br><i>6</i><i>7</i><i>8</i><i>9</i><i>10</i><i>11</i><i>12</i><br><i>13</i><i>14</i><i>15</i><i>16</i><i>17</i><i>18</i><i>19</i><br><i>20</i><i>21</i><i>22</i><i>23</i><i>24</i><i>25</i><i>26</i><br><i>27</i><i>28</i><i>29</i><i>30</i><i>&nbsp;</i><i>&nbsp;</i><i>&nbsp;</i></div>
<div class="t hei" style="left:923px;top:727.6px;font-size:12px;line-height:12px;color:#999;transform:scale(0.3500);transform-origin:0 0;font-weight:400;width:50.3px;white-space:normal;text-align:center;">十月</div>
<div class="t hei cal cal2" style="left:923px;top:732.8000000000001px;width:105.6px;line-height:13.2px;color:#969696;transform:scale(0.1667)"><i>日</i><i>一</i><i>二</i><i>三</i><i>四</i><i>五</i><i>六</i><br><i>&nbsp;</i><i>&nbsp;</i><i>&nbsp;</i><i>&nbsp;</i><i>1</i><i>2</i><i>3</i><br><i>4</i><i>5</i><i>6</i><i>7</i><i>8</i><i>9</i><i>10</i><br><i>11</i><i>12</i><i>13</i><i>14</i><i>15</i><i>16</i><i>17</i><br><i>18</i><i>19</i><i>20</i><i>21</i><i>22</i><i>23</i><i>24</i><br><i>25</i><i>26</i><i>27</i><i>28</i><i>29</i><i>30</i><i>31</i></div>
<div class="t hei" style="left:944.8px;top:727.6px;font-size:12px;line-height:12px;color:#999;transform:scale(0.3500);transform-origin:0 0;font-weight:400;width:50.3px;white-space:normal;text-align:center;">十一月</div>
<div class="t hei cal cal2" style="left:944.8px;top:732.8000000000001px;width:105.6px;line-height:13.2px;color:#969696;transform:scale(0.1667)"><i>日</i><i>一</i><i>二</i><i>三</i><i>四</i><i>五</i><i>六</i><br><i>1</i><i>2</i><i>3</i><i>4</i><i>5</i><i>6</i><i>7</i><br><i>8</i><i>9</i><i>10</i><i>11</i><i>12</i><i>13</i><i>14</i><br><i>15</i><i>16</i><i>17</i><i>18</i><i>19</i><i>20</i><i>21</i><br><i>22</i><i>23</i><i>24</i><i>25</i><i>26</i><i>27</i><i>28</i><br><i>29</i><i>30</i><i>&nbsp;</i><i>&nbsp;</i><i>&nbsp;</i><i>&nbsp;</i><i>&nbsp;</i></div>
<div class="t hei" style="left:966.6px;top:727.6px;font-size:12px;line-height:12px;color:#999;transform:scale(0.3500);transform-origin:0 0;font-weight:400;width:50.3px;white-space:normal;text-align:center;">十二月</div>
<div class="t hei cal cal2" style="left:966.6px;top:732.8000000000001px;width:105.6px;line-height:13.2px;color:#969696;transform:scale(0.1667)"><i>日</i><i>一</i><i>二</i><i>三</i><i>四</i><i>五</i><i>六</i><br><i>&nbsp;</i><i>&nbsp;</i><i>1</i><i>2</i><i>3</i><i>4</i><i>5</i><br><i>6</i><i>7</i><i>8</i><i>9</i><i>10</i><i>11</i><i>12</i><br><i>13</i><i>14</i><i>15</i><i>16</i><i>17</i><i>18</i><i>19</i><br><i>20</i><i>21</i><i>22</i><i>23</i><i>24</i><i>25</i><i>26</i><br><i>27</i><i>28</i><i>29</i><i>30</i><i>31</i><i>&nbsp;</i><i>&nbsp;</i></div>
<svg style="left:1050px;top:690px" width="224" height="70" viewBox="1050 690 224 70">
<g opacity=".85"><path d="M1233 706Q1226 702 1225.5 694.5Q1233 697 1236 705Z" fill="#5cae4a"/><path d="M1237 704Q1238 697 1247.5 693.5Q1247 702 1240 706.5Z" fill="#6cc05a"/><path d="M1232 708Q1226 709 1222.5 715Q1230 716 1235 710Z" fill="#78c868"/><path d="M1238 709Q1245 709 1250 714Q1243 717 1237 712Z" fill="#58a848"/><path d="M1232 717Q1228 721 1229 727Q1235 724 1235 718Z" fill="#74c462"/></g>
<g font-family="Liberation Sans, sans-serif" opacity=".82" stroke-width=".7">
<text x="1073" y="731" font-size="24" letter-spacing="-.6"><tspan fill="#e2555a" stroke="#e2555a">W</tspan><tspan fill="#5fd05f" stroke="#5fd05f">i</tspan><tspan fill="#a05cc0" stroke="#a05cc0">n</tspan><tspan fill="#5fd05f" stroke="#5fd05f">d</tspan><tspan fill="#a05cc0" stroke="#a05cc0">o</tspan><tspan fill="#e2555a" stroke="#e2555a">w</tspan><tspan fill="#a05cc0" stroke="#a05cc0">s</tspan></text>
<text x="1166" y="731" font-size="43" font-style="italic" fill="#e2555a" stroke="#e2555a">7</text>
<text x="1056" y="754" font-size="22" fill="#e2555a" stroke="#e2555a" textLength="212" lengthAdjust="spacingAndGlyphs">www.windows7en.com</text>
</g>
<text x="1189" y="731" font-family="Liberation Serif, Noto Serif CJK SC, serif" font-weight="900" font-size="31" fill="#e2555a" opacity=".9" textLength="61" lengthAdjust="spacingAndGlyphs">之家</text>
</svg>
</body>
</html>
